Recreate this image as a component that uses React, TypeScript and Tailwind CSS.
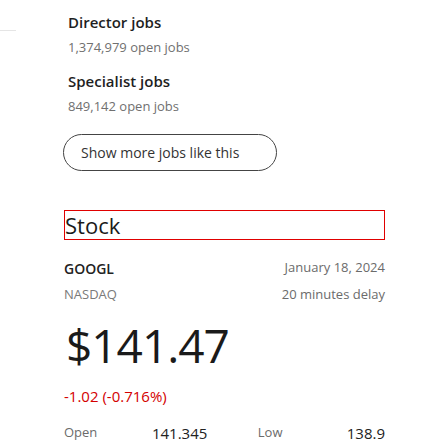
const font = { fontFamily: '"Open Sans", "Noto Sans", sans-serif' }

type JobRow = { title: string; count: string }

const jobs: JobRow[] = [
  { title: 'Director jobs', count: '1,374,979 open jobs' },
  { title: 'Specialist jobs', count: '849,142 open jobs' },
]

export default function App() {
  return (
    <div className="relative w-[448px] h-[448px] bg-white overflow-hidden" style={font}>
      <div className="absolute left-0 top-[30px] w-[16px] h-px bg-[#e5e5e5]" />
      <div className="ml-[64px] w-[321px] pt-[10px]">
        <div className="flex flex-col gap-[11px] pl-[4px]">
          {jobs.map((j) => (
            <div key={j.title}>
              <div className="h-[24px] leading-[24px] text-[15px] font-semibold text-[#1f1f1f]">
                {j.title}
              </div>
              <div className="mt-[2px] h-[22px] leading-[22px] text-[13px] text-[#707070]">
                {j.count}
              </div>
            </div>
          ))}
        </div>
        <button
          type="button"
          className="mt-[17px] -ml-[1px] w-[214px] h-[37px] rounded-full border border-[#444] text-left pl-[17px] text-[14px] text-[#333]"
        >
          Show more jobs like this
        </button>
        <div className="mt-[39px] h-[30px] border border-[#e00000] leading-[28px] text-[22px] text-[#1a1a1a]">
          Stock
        </div>
        <div className="mt-[17px] flex justify-between items-center h-[22px]">
          <span className="text-[14px] font-semibold text-[#222]">GOOGL</span>
          <span className="text-[13px] text-[#6b6b6b]">January 18, 2024</span>
        </div>
        <div className="mt-[5px] flex justify-between items-center h-[22px]">
          <span className="text-[13px] text-[#7a7a7a]">NASDAQ</span>
          <span className="text-[13px] text-[#6b6b6b]">20 minutes delay</span>
        </div>
        <div className="mt-[13px] h-[52px] leading-[52px] text-[46px] tracking-[-1px] text-[#1a1a1a] pl-[2px]">
          $141.47
        </div>
        <div className="mt-[14px] h-[22px] leading-[22px] text-[15px] text-[#d40000]">
          -1.02 (-0.716%)
        </div>
        <div className="mt-[15px] flex items-center h-[22px]">
          <span className="w-[88px] text-[13px] text-[#6b6b6b]">Open</span>
          <span className="w-[106px] text-[15px] text-[#222]">141.345</span>
          <span className="w-[89px] text-[13px] text-[#6b6b6b]">Low</span>
          <span className="flex-1 text-right text-[15px] text-[#222]">138.9</span>
        </div>
      </div>
    </div>
  )
}
